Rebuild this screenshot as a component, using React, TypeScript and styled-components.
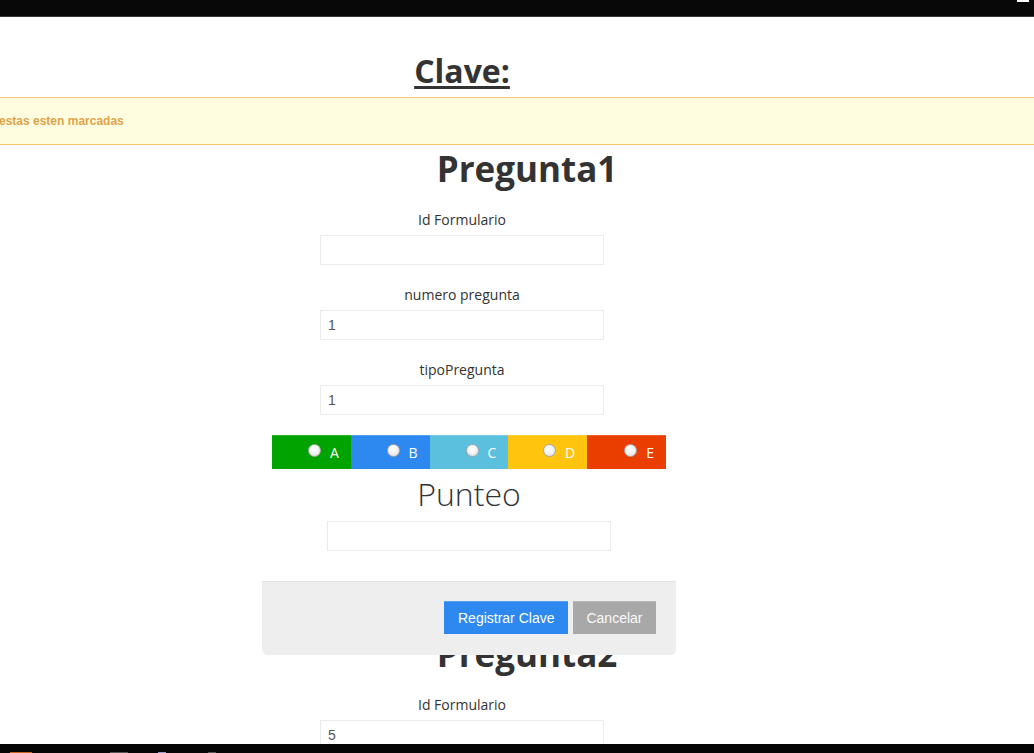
import React from "react";
import styled, { createGlobalStyle } from "styled-components";

const GlobalStyle = createGlobalStyle`
  html, body { margin: 0; padding: 0; background: #fff; overflow: hidden; }
  body { font-family: "Open Sans", "Liberation Sans", Arial, sans-serif; color: #333; }
  * { box-sizing: border-box; }
`;

const Page = styled.div`
  width: 1034px;
  height: 753px;
  display: flex;
  flex-direction: column;
  overflow: hidden;
  background: #fff;
`;

const TopBar = styled.div`
  height: 17px;
  flex: none;
  background: #080808;
  border-bottom: 1px solid #3a3a3a;
  display: flex;
  justify-content: flex-end;
  align-items: flex-start;
  padding-right: 5px;
`;

const TopMark = styled.span`
  width: 12px;
  height: 2px;
  background: #fff;
`;

const Content = styled.div`
  position: relative;
  flex: 1;
  overflow: hidden;
`;

const Title = styled.h2<{ $axis: number }>`
  margin: 36px 0 9px;
  width: ${(p) => p.$axis * 2}px;
  text-align: center;
  font-size: 32px;
  line-height: 1.1;
  font-weight: 700;
  color: #333;
  span { text-decoration: underline; text-decoration-thickness: 3px; text-underline-offset: 3px; }
`;

const Alert = styled.div`
  background: #fffde0;
  border-top: 1px solid #f1c56e;
  border-bottom: 1px solid #f1c56e;
  padding: 15px 0;
  font-family: "Liberation Sans", Arial, sans-serif;
  font-weight: 700;
  font-size: 12px;
  line-height: 16px;
  color: #dea349;
  span { display: block; margin-left: -1px; }
`;

const Question = styled.section`
  display: flex;
  flex-direction: column;
`;

const QuestionTitle = styled.h1<{ $top: number }>`
  margin: ${(p) => p.$top}px 0 21px;
  width: 1054px;
  text-align: center;
  font-size: 35px;
  line-height: 40px;
  font-weight: 700;
  color: #333;
`;

const Field = styled.div<{ $left: number }>`
  margin-left: ${(p) => p.$left}px;
  width: 284px;
  margin-bottom: 20px;
  display: flex;
  flex-direction: column;
`;

const Label = styled.label`
  display: block;
  text-align: center;
  font-size: 14px;
  line-height: 20px;
  margin-bottom: 5px;
  color: #333;
`;

const Input = styled.input`
  width: 284px;
  height: 30px;
  border: 1px solid #ebebeb;
  padding: 0 7px;
  font-family: "Liberation Sans", Arial, sans-serif;
  font-size: 14px;
  color: #555;
  background: #fff;
  outline: none;
`;

const ChoiceBar = styled.div`
  margin-left: 272px;
  width: 394px;
  height: 34px;
  display: grid;
  grid-template-columns: repeat(5, 1fr);
`;

const Choice = styled.label<{ $bg: string }>`
  background: ${(p) => p.$bg};
  border-top: 1px solid rgba(255, 255, 255, 0.18);
  display: flex;
  justify-content: flex-end;
  align-items: center;
  gap: 9px;
  padding-right: 12px;
  color: #fff;
  font-size: 14px;
  line-height: 20px;
`;

const Radio = styled.input`
  appearance: none;
  margin: -4px 0 0 0;
  width: 13px;
  height: 13px;
  border-radius: 50%;
  border: 1px solid #a9a9a9;
  background: radial-gradient(circle at 45% 35%, #ffffff 0%, #f4f4f4 45%, #d4d4d4 100%);
`;

const PunteoTitle = styled.div`
  margin: 7px 0 10px;
  width: 938px;
  text-align: center;
  font-size: 32px;
  line-height: 35px;
  font-weight: 300;
  color: #333;
`;

const Footer = styled.div`
  position: absolute;
  left: 262px;
  top: 564px;
  width: 414px;
  height: 74px;
  background: #eeeeee;
  border-top: 1px solid #e3e3e3;
  border-radius: 0 0 6px 6px;
  display: flex;
  justify-content: flex-end;
  align-items: flex-start;
  gap: 5px;
  padding: 19px 20px 0 0;
`;

const Button = styled.button<{ $bg: string; $fg: string }>`
  height: 33px;
  padding: 0 13.5px;
  border: none;
  border-top: 1px solid rgba(255, 255, 255, 0.2);
  background: ${(p) => p.$bg};
  color: ${(p) => p.$fg};
  font-family: "Liberation Sans", Arial, sans-serif;
  font-size: 14px;
  cursor: pointer;
`;

const BottomBar = styled.div`
  height: 9px;
  flex: none;
  background: #050505;
  display: flex;
  align-items: flex-end;
`;

const Tick = styled.span<{ $w: number; $ml: number; $c: string }>`
  width: ${(p) => p.$w}px;
  height: 1px;
  margin-left: ${(p) => p.$ml}px;
  background: ${(p) => p.$c};
`;

const choices = [
  { l: "A", c: "#00a300" },
  { l: "B", c: "#2d89ef" },
  { l: "C", c: "#5bc0de" },
  { l: "D", c: "#ffc40d" },
  { l: "E", c: "#ea3e00" },
];

export default function App() {
  return (
    <>
      <GlobalStyle />
      <Page>
        <TopBar>
          <TopMark />
        </TopBar>
        <Content>
          <Title $axis={462}>
            <span>Clave:</span>
          </Title>
          <Alert>
            <span>estas esten marcadas</span>
          </Alert>
          <Question>
            <QuestionTitle $top={4}>Pregunta1</QuestionTitle>
            <Field $left={320}>
              <Label>Id Formulario</Label>
              <Input defaultValue="" />
            </Field>
            <Field $left={320}>
              <Label>numero pregunta</Label>
              <Input defaultValue="1" />
            </Field>
            <Field $left={320}>
              <Label>tipoPregunta</Label>
              <Input defaultValue="1" />
            </Field>
            <ChoiceBar>
              {choices.map((ch) => (
                <Choice key={ch.l} $bg={ch.c}>
                  <Radio type="radio" name="resp1" />
                  {ch.l}
                </Choice>
              ))}
            </ChoiceBar>
            <PunteoTitle>Punteo</PunteoTitle>
            <Field $left={327}>
              <Input defaultValue="" />
            </Field>
          </Question>
          <Question>
            <QuestionTitle $top={63}>Pregunta2</QuestionTitle>
            <Field $left={320}>
              <Label>Id Formulario</Label>
              <Input defaultValue="5" />
            </Field>
          </Question>
          <Footer>
            <Button $bg="#2d89ef" $fg="#ffffff">Registrar Clave</Button>
            <Button $bg="#a8a8a8" $fg="#fafafa">Cancelar</Button>
          </Footer>
        </Content>
        <BottomBar>
          <Tick $w={22} $ml={10} $c="#c8641e" />
          <Tick $w={18} $ml={78} $c="#555" />
          <Tick $w={8} $ml={30} $c="#9a9ac8" />
          <Tick $w={8} $ml={42} $c="#555" />
        </BottomBar>
      </Page>
    </>
  );
}
